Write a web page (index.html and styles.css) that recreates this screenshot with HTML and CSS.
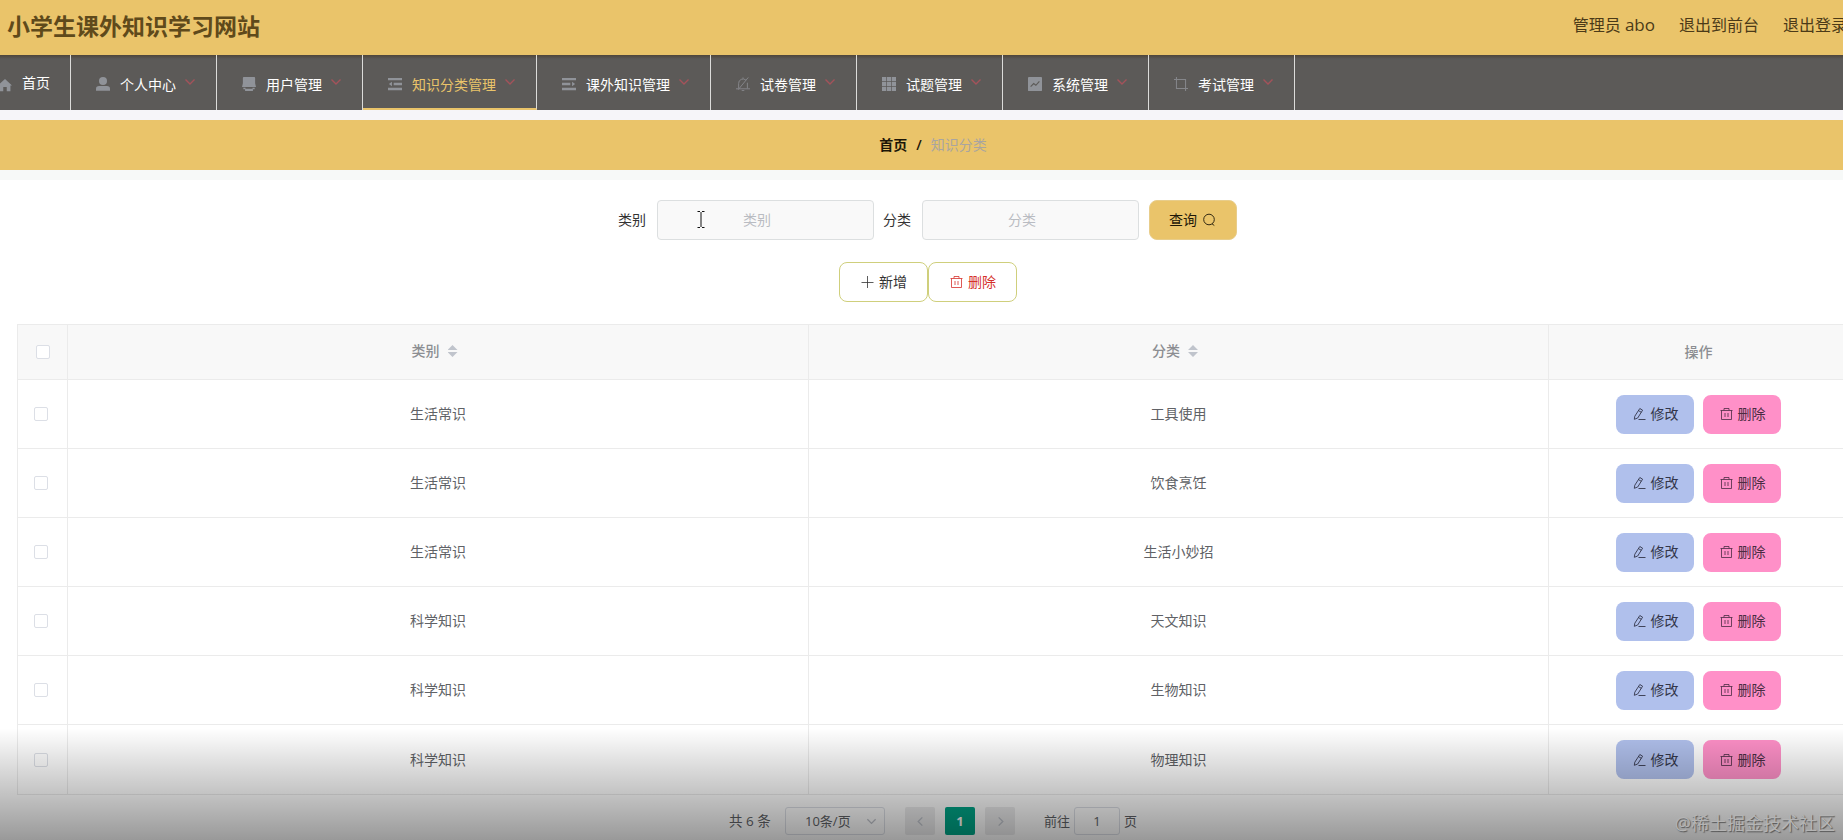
FILE: index.html
```html
<!DOCTYPE html>
<html lang="zh-CN">
<head>
<meta charset="utf-8">
<title>小学生课外知识学习网站</title>
<link rel="stylesheet" href="styles.css">
</head>
<body>
<svg class="defs" width="0" height="0">
  <symbol id="i-home" viewBox="0 0 16 16"><path d="M8 1 16 8.500h-1.800V15H10v-4.600H6V15H1.800V8.500H0z"/></symbol>
  <symbol id="i-user" viewBox="0 0 16 16"><circle cx="8" cy="4.600" r="4.600"/><path d="M0 15.800v-2.300Q0 10.300 3.500 10.300h9q3.500 0 3.500 3.200v2.300z"/></symbol>
  <symbol id="i-goods" viewBox="0 0 16 16"><path d="M2 0h12q1 0 1 1v6l1 4.500H0L1 7V1q0-1 1-1zM1.500 12.300h2.500v1.200h8v-1.200h2.500V14h-2v2h-9v-2h-2z"/></symbol>
  <symbol id="i-fold" viewBox="0 0 16 16"><path d="M0 1h16v2.600H0zM6.500 6.700H16v2.600H6.500zM0 12.400h16V15H0zM1 8l3.500-2.500v5z"/></symbol>
  <symbol id="i-unfold" viewBox="0 0 16 16"><path d="M0 1h16v2.600H0zM0 6.700h9.500v2.600H0zM0 12.400h16V15H0zM15 8l-3.500-2.500v5z"/></symbol>
  <symbol id="i-bell" viewBox="0 0 16 16"><path fill="none" stroke="currentColor" stroke-width="1.100" d="M3 13V7.500a5 5 0 0 1 8.500-3.800M13 6.500V13M0 13.500h16M6.500 15.500h3M2.500 14.500 14 .5M8 2V.5"/></symbol>
  <symbol id="i-grid" viewBox="0 0 16 16"><path d="M0 0h4.800v4.800H0zM5.600 0h4.800v4.800H5.600zM11.200 0H16v4.800h-4.800zM0 5.600h4.800v4.800H0zM5.600 5.600h4.800v4.800H5.600zM11.200 5.600H16v4.800h-4.800zM0 11.200h4.800V16H0zM5.600 11.200h4.800V16H5.600zM11.200 11.200H16V16h-4.800z"/></symbol>
  <symbol id="i-chart" viewBox="0 0 16 16"><path d="M1 0h14q1 0 1 1v14q0 1-1 1H1q-1 0-1-1V1q0-1 1-1z"/><path d="m3 11 3.500-3.500L9 9.500 13 5" fill="none" stroke="#5c5a58" stroke-width="1.300"/></symbol>
  <symbol id="i-crop" viewBox="0 0 16 16"><path fill="none" stroke="currentColor" stroke-width="1.200" d="M2.800 0v13.200H16M0 2.800h13.200V16"/></symbol>
  <symbol id="i-down" viewBox="0 0 12 12"><path fill="none" stroke="currentColor" stroke-width="1.400" d="m1.500 3.500 4.500 4.500 4.500-4.500"/></symbol>
  <symbol id="i-left" viewBox="0 0 12 12"><path fill="none" stroke="currentColor" stroke-width="1.500" d="M8 1.500 3.500 6 8 10.500"/></symbol>
  <symbol id="i-right" viewBox="0 0 12 12"><path fill="none" stroke="currentColor" stroke-width="1.500" d="M4 1.500 8.500 6 4 10.500"/></symbol>
  <symbol id="i-search" viewBox="0 0 14 14"><path fill="none" stroke="currentColor" stroke-width=".9" d="M12.300 6.500a5.300 5.300 0 1 1-10.600 0 5.300 5.300 0 0 1 10.600 0zM10 10.800l2.300 1.700"/></symbol>
  <symbol id="i-plus" viewBox="0 0 14 14"><path fill="none" stroke="currentColor" stroke-width=".8" d="M7.500 1v12M1.500 7.500h12"/></symbol>
  <symbol id="i-trash" viewBox="0 0 14 14"><path fill="none" stroke="currentColor" stroke-width=".8" d="M1.500 3.500h12M2.500 3.500v9h10v-9M5 3.200V1.500h5v1.700M6 6v4M9 6v4"/></symbol>
  <symbol id="i-edit" viewBox="0 0 14 14"><path fill="none" stroke="currentColor" stroke-width=".9" d="M7.800 1.500 10.600 3.200 5.700 11 2.300 12.300 2.800 9.200zM6.500 3.600 9.300 5.300M6.500 12.500H13.500"/></symbol>
</svg>

<header class="topbar">
  <h1 class="topbar__title">小学生课外知识学习网站</h1>
  <nav class="topbar__links"><span>管理员 <span class="topbar__name">abo</span></span><span>退出到前台</span><span>退出登录</span></nav>
</header>

<nav class="menu">
  <a class="menu__item menu__item--home"><svg class="menu__icon"><use href="#i-home"/></svg><span>首页</span></a>
  <a class="menu__item"><svg class="menu__icon"><use href="#i-user"/></svg><span>个人中心</span><svg class="menu__arrow"><use href="#i-down"/></svg></a>
  <a class="menu__item"><svg class="menu__icon"><use href="#i-goods"/></svg><span>用户管理</span><svg class="menu__arrow"><use href="#i-down"/></svg></a>
  <a class="menu__item menu__item--active"><svg class="menu__icon"><use href="#i-fold"/></svg><span>知识分类管理</span><svg class="menu__arrow"><use href="#i-down"/></svg></a>
  <a class="menu__item"><svg class="menu__icon"><use href="#i-unfold"/></svg><span>课外知识管理</span><svg class="menu__arrow"><use href="#i-down"/></svg></a>
  <a class="menu__item"><svg class="menu__icon menu__icon--thin"><use href="#i-bell"/></svg><span>试卷管理</span><svg class="menu__arrow"><use href="#i-down"/></svg></a>
  <a class="menu__item"><svg class="menu__icon"><use href="#i-grid"/></svg><span>试题管理</span><svg class="menu__arrow"><use href="#i-down"/></svg></a>
  <a class="menu__item"><svg class="menu__icon"><use href="#i-chart"/></svg><span>系统管理</span><svg class="menu__arrow"><use href="#i-down"/></svg></a>
  <a class="menu__item"><svg class="menu__icon menu__icon--thin"><use href="#i-crop"/></svg><span>考试管理</span><svg class="menu__arrow"><use href="#i-down"/></svg></a>
</nav>

<div class="crumbs"><b>首页</b><b class="crumbs__sep">/</b><span>知识分类</span></div>

<main class="content">
  <div class="search">
    <label class="search__label">类别</label>
    <div class="search__input">类别<svg class="ibeam" viewBox="0 0 8 17"><path d="M.5.500H3M5 .500h2.500M.5 16.500H3M5 16.500h2.500M4 1v15" fill="none" stroke="#111"/></svg></div>
    <label class="search__label">分类</label>
    <div class="search__input">分类</div>
    <button class="btn btn--query">查询<svg class="ico"><use href="#i-search"/></svg></button>
  </div>
  <div class="actions">
    <button class="btn btn--line"><svg class="ico"><use href="#i-plus"/></svg>新增</button>
    <button class="btn btn--line btn--danger"><svg class="ico"><use href="#i-trash"/></svg>删除</button>
  </div>

  <div class="table">
    <div class="row row--head">
      <div class="cell cell--check"><i class="box"></i></div>
      <div class="cell cell--sort">类别<i class="sort"></i></div>
      <div class="cell cell--sort">分类<i class="sort"></i></div>
      <div class="cell cell--op">操作</div>
    </div>
    <div class="row"><div class="cell cell--check"><i class="box"></i></div><div class="cell">生活常识</div><div class="cell">工具使用</div><div class="cell"><button class="btn btn--edit"><svg class="ico"><use href="#i-edit"/></svg>修改</button><button class="btn btn--del"><svg class="ico"><use href="#i-trash"/></svg>删除</button></div></div>
    <div class="row"><div class="cell cell--check"><i class="box"></i></div><div class="cell">生活常识</div><div class="cell">饮食烹饪</div><div class="cell"><button class="btn btn--edit"><svg class="ico"><use href="#i-edit"/></svg>修改</button><button class="btn btn--del"><svg class="ico"><use href="#i-trash"/></svg>删除</button></div></div>
    <div class="row"><div class="cell cell--check"><i class="box"></i></div><div class="cell">生活常识</div><div class="cell">生活小妙招</div><div class="cell"><button class="btn btn--edit"><svg class="ico"><use href="#i-edit"/></svg>修改</button><button class="btn btn--del"><svg class="ico"><use href="#i-trash"/></svg>删除</button></div></div>
    <div class="row"><div class="cell cell--check"><i class="box"></i></div><div class="cell">科学知识</div><div class="cell">天文知识</div><div class="cell"><button class="btn btn--edit"><svg class="ico"><use href="#i-edit"/></svg>修改</button><button class="btn btn--del"><svg class="ico"><use href="#i-trash"/></svg>删除</button></div></div>
    <div class="row"><div class="cell cell--check"><i class="box"></i></div><div class="cell">科学知识</div><div class="cell">生物知识</div><div class="cell"><button class="btn btn--edit"><svg class="ico"><use href="#i-edit"/></svg>修改</button><button class="btn btn--del"><svg class="ico"><use href="#i-trash"/></svg>删除</button></div></div>
    <div class="row"><div class="cell cell--check"><i class="box"></i></div><div class="cell">科学知识</div><div class="cell">物理知识</div><div class="cell"><button class="btn btn--edit"><svg class="ico"><use href="#i-edit"/></svg>修改</button><button class="btn btn--del"><svg class="ico"><use href="#i-trash"/></svg>删除</button></div></div>
  </div>

  <div class="pager">
    <span class="pager__total">共 6 条</span>
    <div class="pager__size"><span>10条/页</span><svg class="pager__chev"><use href="#i-down"/></svg></div>
    <span class="pager__btn"><svg class="pager__arrow"><use href="#i-left"/></svg></span>
    <span class="pager__btn pager__btn--on">1</span>
    <span class="pager__btn"><svg class="pager__arrow"><use href="#i-right"/></svg></span>
    <span class="pager__jump">前往</span>
    <span class="pager__input">1</span>
    <span>页</span>
  </div>
</main>

<div class="shade"></div>
<div class="watermark">@稀土掘金技术社区</div>
</body>
</html>
```
FILE: styles.css
```css
* { box-sizing: border-box; }
body {
  margin: 0;
  width: 1843px;
  height: 840px;
  position: relative;
  overflow: hidden;
  background: #fff;
  font: 14px/20px "Open Sans", "Noto Sans CJK SC", sans-serif;
  color: #606266;
}
svg { display: block; flex: none; fill: currentColor; }
.defs { position: absolute; }

.topbar {
  display: flex;
  justify-content: space-between;
  height: 55px;
  padding-left: 7px;
  background: #eac46a;
  overflow: hidden;
}
.topbar__title { margin: 0; font-size: 23px; line-height: 52px; font-weight: 700; color: #5f4a1b; }
.topbar__links {
  display: flex;
  flex: none;
  gap: 24px;
  margin-right: -4px;
  font-size: 16px;
  line-height: 50px;
  color: #4b3a18;
  white-space: nowrap;
}
.topbar__name { font-size: 17px; line-height: 1; }

.menu {
  display: flex;
  height: 55px;
  background: linear-gradient(#4f463a, #5c5a58 4px);
  color: #fff;
}
.menu__item {
  display: flex;
  align-items: center;
  height: 55px;
  padding: 4px 20px 0 25px;
  border-right: 1px solid #dcdcda;
  white-space: nowrap;
}
.menu__item--home { width: 71px; padding: 0; }
.menu__item--home .menu__icon { margin: 4px 10px 0 -2px; }
.menu__item--active { color: #eac46a; border-bottom: 2px solid #eac46a; padding-top: 6px; }
.menu__icon { width: 14px; height: 14px; margin: -2px 10px 0 0; color: #909399; }
.menu__icon--thin { color: #85868a; }
.menu__arrow { width: 12px; height: 12px; margin: -5px 0 0 8px; color: #a4525a; }

.crumbs {
  display: flex;
  justify-content: center;
  align-items: center;
  height: 60px;
  padding-left: 23px;
  border-top: 10px solid #f6f5f9;
  background: #eac46a;
  color: #a9a5a0;
}
.crumbs b { color: #1c1608; font-weight: 600; }
.crumbs b.crumbs__sep { margin: 0 9px; }

.content { padding: 20px 0 0 17px; border-top: 10px solid #f7f9f8; }
.search {
  display: flex;
  align-items: center;
  height: 40px;
  padding-left: 601px;
}
.search__label { width: 39px; color: #333; }
.search__input {
  position: relative;
  width: 217px;
  height: 40px;
  margin-right: 9px;
  padding: 0 31px 0 14px;
  border: 1px solid #dcdfe0;
  border-radius: 4px;
  background: #f9f9f9;
  line-height: 38px;
  text-align: center;
  color: #b9bcc2;
}
.ibeam { position: absolute; left: 39px; top: 10px; width: 8px; height: 17px; }

.btn {
  display: flex;
  align-items: center;
  justify-content: center;
  gap: 5px;
  height: 40px;
  padding: 0;
  border: 1px solid transparent;
  border-radius: 8px;
  font: inherit;
}
.ico { width: 14px; height: 14px; }
.btn--query { width: 88px; margin-left: 1px; padding-right: 1px; background: #eac46a; border-color: #e8cd8b; color: #1f1808; }
.actions { display: flex; margin-top: 22px; padding-left: 822px; }
.btn--line { width: 89px; background: #fff; border-color: #cfcf7c; color: #333; }
.btn--danger { color: #d5302c; }

.table {
  width: 1832px;
  margin-top: 22px;
  border: 1px solid #ebebeb;
  border-right: 0;
}
.row {
  display: grid;
  grid-template-columns: 50px 741px 740px 300px;
  height: 69px;
  border-bottom: 1px solid #ebebeb;
}
.row--head { height: 55px; background: #f8f8f8; color: #8c8e92; font-weight: 500; }
.row:last-child { border-bottom: 0; }
.cell { display: flex; align-items: center; justify-content: center; border-right: 1px solid #ebebeb; }
.row--head .cell--sort { padding: 0 12px 2px 0; }
.cell--check { padding-right: 3px; }
.row--head .cell--check { padding: 0 0 0 1px; }
.box { width: 14px; height: 14px; border: 1px solid #dcdfe6; border-radius: 2px; background: #fff; }
.sort {
  width: 10px;
  height: 12px;
  margin: 0 -5px 0 8px;
  background: #c0c4cc;
  clip-path: polygon(50% 0, 100% 42%, 0 42%, 0 58%, 100% 58%, 50% 100%, 0 58%, 0 42%);
}
.btn--edit, .btn--del { width: 78px; height: 39px; color: #33364a; }
.btn--edit { margin-right: 9px; background: #b0c0ec; }
.btn--del { background: #ff90c8; color: #4a2c42; }

.pager { display: flex; align-items: center; margin: 12px 0 0 712px; height: 28px; font-size: 13px; }
.pager__total { width: 56px; font-size: 13.5px; }
.pager__size {
  display: flex;
  align-items: center;
  justify-content: space-between;
  width: 100px;
  height: 28px;
  margin-right: 20px;
  padding: 0 7px 0 19px;
  border: 1px solid #dcdfe6;
  border-radius: 3px;
}
.pager__chev { width: 11px; height: 11px; color: #c0c4cc; }
.pager__btn {
  display: flex;
  align-items: center;
  justify-content: center;
  width: 30px;
  height: 28px;
  margin-right: 10px;
  border-radius: 2px;
  background: #ececed;
  color: #c0c4cc;
}
.pager__arrow { width: 11px; height: 11px; }
.pager__btn--on { background: #00a587; color: #fff; font-weight: 700; }
.pager__jump { margin-left: 19px; width: 30px; }
.pager__input { width: 46px; height: 28px; margin-right: 4px; border: 1px solid #dcdfe6; border-radius: 3px; line-height: 26px; text-align: center; }

.shade {
  position: absolute;
  left: 0;
  right: 0;
  bottom: 0;
  height: 112px;
  background: linear-gradient(rgba(0, 0, 0, 0), rgba(0, 0, 0, .4));
}
.watermark {
  position: absolute;
  right: 8px;
  bottom: 5px;
  font-size: 18px;
  line-height: 24px;
  color: #b4b4b4;
  text-shadow: 1px 1px 1px #555;
}
```
